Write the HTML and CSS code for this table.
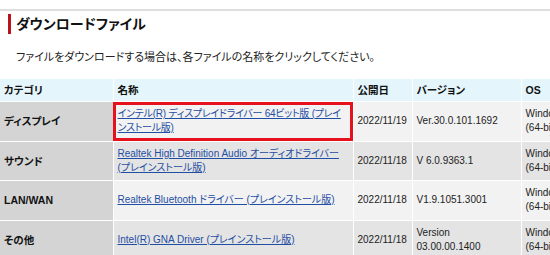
FILE: index.html
```html
<!DOCTYPE html>
<html lang="ja">
<head>
<meta charset="utf-8">
<title>ダウンロードファイル</title>
<link rel="stylesheet" href="styles.css">
</head>
<body>
<div class="topline"></div>
<section class="dl">
  <h2 class="dl-title">ダウンロードファイル</h2>
  <p class="dl-lead">ファイルをダウンロードする場合は、各ファイルの名称をクリックしてください。</p>
  <table class="dl-table">
    <colgroup>
      <col class="c-cat">
      <col class="c-name">
      <col class="c-date">
      <col class="c-ver">
      <col class="c-os">
    </colgroup>
    <thead>
      <tr><th>カテゴリ</th><th>名称</th><th>公開日</th><th>バージョン</th><th>OS</th></tr>
    </thead>
    <tbody>
      <tr class="light">
        <th class="cat">ディスプレイ</th>
        <td class="hl"><a class="tight" href="#">インテル(R) ディスプレイドライバー 64ビット版 (プレインストール版)</a></td>
        <td>2022/11/19</td>
        <td>Ver.30.0.101.1692</td>
        <td>Windows 11<br>(64-bit)</td>
      </tr>
      <tr class="dark">
        <th class="cat">サウンド</th>
        <td><a href="#">Realtek High Definition Audio オーディオドライバー (プレインストール版)</a></td>
        <td>2022/11/18</td>
        <td>V 6.0.9363.1</td>
        <td>Windows 11<br>(64-bit)</td>
      </tr>
      <tr class="light">
        <th class="cat">LAN/WAN</th>
        <td><a href="#">Realtek Bluetooth ドライバー (プレインストール版)</a></td>
        <td>2022/11/18</td>
        <td>V1.9.1051.3001</td>
        <td>Windows 11<br>(64-bit)</td>
      </tr>
      <tr class="dark">
        <th class="cat">その他</th>
        <td><a href="#">Intel(R) GNA Driver (プレインストール版)</a></td>
        <td>2022/11/18</td>
        <td>Version 03.00.00.1400</td>
        <td>Windows 11<br>(64-bit)</td>
      </tr>
    </tbody>
  </table>
</section>
</body>
</html>
```
FILE: styles.css
```css
html, body {
  margin: 0;
  padding: 0;
  background: #fff;
}
body {
  width: 550px;
  overflow: hidden;
  font-family: "Liberation Sans", "Noto Sans CJK JP", sans-serif;
  color: #222;
  font-feature-settings: "palt";
}
.topline {
  margin-top: 9px;
  border-top: 2px solid #dedede;
}
.dl-title {
  margin: 3px 0 0 8px;
  padding-left: 5px;
  border-left: 3px solid #b8141c;
  font-size: 14px;
  line-height: 20px;
  font-weight: bold;
  color: #111;
}
.dl-lead {
  margin: 15px 0 0 16px;
  font-size: 11px;
  line-height: 16px;
  color: #222;
}
.dl-table {
  margin-top: 14px;
  width: 640px;
  table-layout: fixed;
  border-collapse: collapse;
  font-size: 10px;
  line-height: 14px;
}
.c-cat { width: 113px; }
.c-name { width: 240px; }
.c-date { width: 59px; }
.c-ver { width: 109px; }
.c-os { width: 119px; }
.dl-table th,
.dl-table td {
  border-right: 1px solid #fff;
  border-bottom: 1px solid #fff;
  text-align: left;
  vertical-align: middle;
  padding: 5px 4px 5.5px;
}
.dl-table thead th {
  background: #e4f6fc;
  font-weight: bold;
  font-size: 10.5px;
  padding: 4px 4px;
  color: #111;
}
.dl-table tbody th.cat {
  background: #d4d4d4;
  font-weight: bold;
  font-size: 10.5px;
  color: #111;
}
.light td { background: #f2f2f2; }
.dark td { background: #e4e4e4; }
.dl-table td.hl {
  outline: 3px solid #e5121d;
  outline-offset: -3px;
}
.dl-table a {
  color: #1f4ea3;
  text-decoration: underline;
}
.dl-table a.tight {
  letter-spacing: -0.25px;
}
```
